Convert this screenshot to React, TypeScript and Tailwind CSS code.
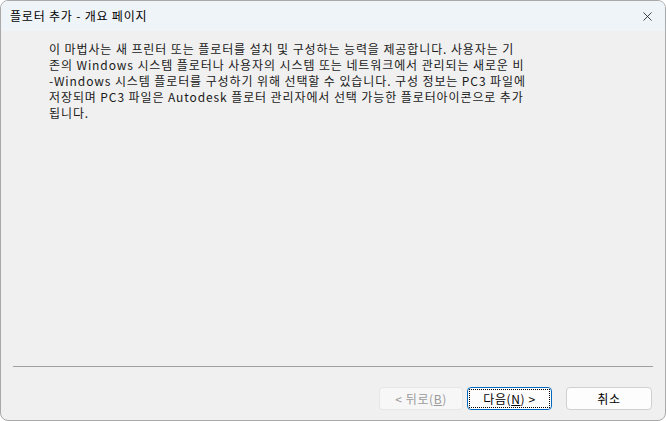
import React from 'react';
import { X } from 'lucide-react';

const lines = [
  '이 마법사는 새 프린터 또는 플로터를 설치 및 구성하는 능력을 제공합니다. 사용자는 기',
  '존의 Windows 시스템 플로터나 사용자의 시스템 또는 네트워크에서 관리되는 새로운 비',
  '-Windows 시스템 플로터를 구성하기 위해 선택할 수 있습니다. 구성 정보는 PC3 파일에',
  '저장되며 PC3 파일은 Autodesk 플로터 관리자에서 선택 가능한 플로터아이콘으로 추가',
  '됩니다.',
];

const font = { fontFamily: '"Noto Sans CJK KR", "Noto Sans", sans-serif' };

const App: React.FC = () => {
  return (
    <div className="w-[666px] h-[421px] bg-white" style={font}>
      <div className="w-full h-full flex flex-col rounded-[8px] border border-[#a9a9a9] overflow-hidden bg-[#f0f0f0]">
        {/* Title bar */}
        <div className="h-[30px] flex items-center justify-between bg-[#eff4f9] pl-[9px] pr-[10px]">
          <span className="text-[12px] text-black leading-none tracking-[0.8px]">플로터 추가 - 개요 페이지</span>
          <X className="w-[15px] h-[15px] text-[#1a1a1a]" strokeWidth={1.3} />
        </div>

        {/* Body */}
        <div className="flex-1 flex flex-col">
          <div className="pl-[48px] pt-[10px] text-[12px] leading-[16px] text-[#1a1a1a] tracking-[0.9px]">
            {lines.map((l) => (
              <div key={l} className="whitespace-nowrap">{l}</div>
            ))}
          </div>

          <div className="flex-1" />

          {/* Separator */}
          <div className="mx-[12px] h-px bg-[#a0a0a0]" />

          {/* Buttons */}
          <div className="flex justify-end items-center pr-[13px] pt-[20px] pb-[10px] tracking-[0.6px]">
            <button className="w-[84px] h-[23px] rounded-[4px] border border-[#e6e6e6] bg-[#f7f7f7] text-[12px] text-[#9a9a9a] leading-none">
              &lt; 뒤로(<span className="underline">B</span>)
            </button>
            <button className="ml-[4px] w-[85px] h-[23px] rounded-[4px] border border-[#0067c0] bg-[#fdfdfd] p-px">
              <span className="flex items-center justify-center w-full h-full border border-dotted border-black text-[12px] text-black leading-none">
                다음(<span className="underline">N</span>) &gt;
              </span>
            </button>
            <button className="ml-[14px] w-[86px] h-[23px] rounded-[4px] border border-[#d0d0d0] bg-[#fdfdfd] text-[12px] text-black leading-none">
              취소
            </button>
          </div>
        </div>
      </div>
    </div>
  );
};

export default App;
